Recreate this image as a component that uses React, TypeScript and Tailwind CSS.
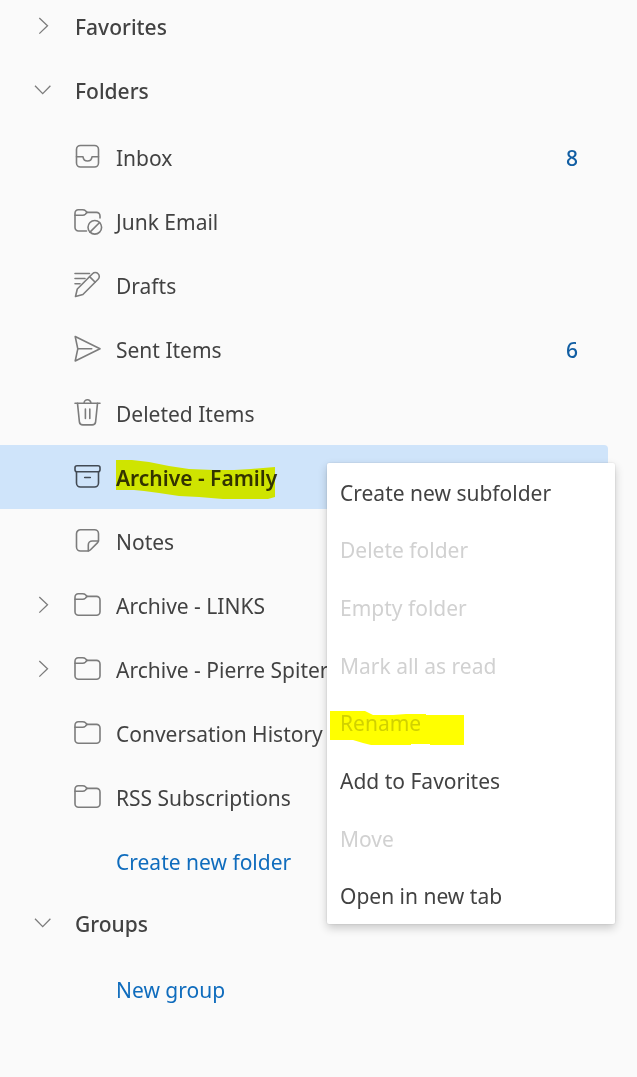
import { useState } from 'react'
import type { ReactNode } from 'react'
import clsx from 'clsx'

type IconName = 'inbox' | 'junk' | 'drafts' | 'sent' | 'trash' | 'archive' | 'notes' | 'folder'

type Folder = {
  name: string
  icon: IconName
  count?: number
  expandable?: boolean
}

const folders: Folder[] = [
  { name: 'Inbox', icon: 'inbox', count: 8 },
  { name: 'Junk Email', icon: 'junk' },
  { name: 'Drafts', icon: 'drafts' },
  { name: 'Sent Items', icon: 'sent', count: 6 },
  { name: 'Deleted Items', icon: 'trash' },
  { name: 'Archive - Family', icon: 'archive' },
  { name: 'Notes', icon: 'notes' },
  { name: 'Archive - LINKS', icon: 'folder', expandable: true },
  { name: 'Archive - Pierre Spiter', icon: 'folder', expandable: true },
  { name: 'Conversation History', icon: 'folder' },
  { name: 'RSS Subscriptions', icon: 'folder' },
]

const menuItems = [
  { label: 'Create new subfolder', enabled: true },
  { label: 'Delete folder', enabled: false },
  { label: 'Empty folder', enabled: false },
  { label: 'Mark all as read', enabled: false },
  { label: 'Rename', enabled: false, marked: true },
  { label: 'Add to Favorites', enabled: true },
  { label: 'Move', enabled: false },
  { label: 'Open in new tab', enabled: true },
]

const iconShapes: Record<IconName, ReactNode> = {
  inbox: (
    <>
      <rect x="3.5" y="3.5" width="22" height="21.5" rx="4" />
      <path d="M3.5 14.8H10c.4 2.6 2 4.2 4.5 4.2s4.1-1.6 4.5-4.2h6.5" />
    </>
  ),
  junk: (
    <>
      <path d="M13.5 25H5.5A3.5 3.5 0 0 1 2 21.500V7.200A3.300 3.300 0 0 1 5.300 3.700H9.500c1.300 0 2.300.3 3 1.100L14 6.400h9.500A3.500 3.500 0 0 1 27 9.900V12" />
      <path d="M2 9.300h7.700c1.100 0 1.900-.3 2.600-1l1.700-1.900" />
      <circle cx="21.800" cy="21.300" r="6.800" />
      <path d="m17 26.100 9.600-9.600" />
    </>
  ),
  drafts: (
    <>
      <path d="M2 3.500h14.500M2 8.500h10M2 13.700h5" />
      <path d="M2.500 26.500 4.300 19 19.500 3.700a3.900 3.900 0 0 1 5.600 0 3.900 3.900 0 0 1 0 5.600L9.900 24.500z" />
      <path d="m16.600 6.600 5.600 5.600" />
    </>
  ),
  sent: (
    <>
      <path d="M2.200 2.500 27 14.800 2.200 27l2.600-12.200z" />
      <path d="M4.800 14.800h13.900" />
    </>
  ),
  trash: (
    <>
      <path d="M2 5.300h25M11 5.300a3.500 3.500 0 0 1 7 0" />
      <path d="m4.500 5.300 1.900 18.500a3.500 3.500 0 0 0 3.500 3.100h9.200a3.500 3.500 0 0 0 3.500-3.100l1.900-18.500" />
      <path d="M12.400 11v9.500M16.800 11v9.500" />
    </>
  ),
  archive: (
    <>
      <rect x="2" y="3.700" width="25" height="6" rx="2" />
      <path d="M3.500 9.700V21a4 4 0 0 0 4 4h14a4 4 0 0 0 4-4V9.700M11.700 15.500h5.600" />
    </>
  ),
  notes: (
    <>
      <path d="M15 25H7.500a4 4 0 0 1-4-4V7.700a4 4 0 0 1 4-4h14a4 4 0 0 1 4 4v6.600c0 1-.4 1.900-1.100 2.600l-6.900 6.900A4 4 0 0 1 15 25z" />
      <path d="M15.300 25v-6a4 4 0 0 1 4-4h6.200" />
    </>
  ),
  folder: (
    <>
      <path d="M2 21.800V7.200a3.300 3.300 0 0 1 3.300-3.500H9.500c1.300 0 2.300.3 3 1.100L14 6.400h9.500A3.500 3.500 0 0 1 27 9.900v11.900a3.500 3.500 0 0 1-3.500 3.500h-18A3.500 3.500 0 0 1 2 21.800z" />
      <path d="M2 9.300h7.700c1.100 0 1.900-.3 2.600-1l1.700-1.900" />
    </>
  ),
}

function FolderIcon({ name, active }: { name: IconName; active?: boolean }) {
  return (
    <svg
      viewBox="0 0 30 30"
      className={clsx('size-[30px] shrink-0', active ? 'text-[#424a54]' : 'text-[#7c7c7c]')}
      fill="none"
      stroke="currentColor"
      strokeWidth="1.6"
      strokeLinecap="round"
      strokeLinejoin="round"
      aria-hidden="true"
    >
      {iconShapes[name]}
    </svg>
  )
}

function Chevron({ open }: { open: boolean }) {
  return (
    <svg viewBox="0 0 20 20" className="size-5 shrink-0 text-[#7c7c7c]" fill="none" stroke="currentColor" strokeWidth="1.3" aria-hidden="true">
      <path d={open ? 'M2 5.700 9.700 13.600 17.400 5.700' : 'M6.300 2 14.500 9.800 6.300 17.600'} />
    </svg>
  )
}

function SectionHeader({ title, open, onToggle }: { title: string; open: boolean; onToggle: () => void }) {
  return (
    <h2>
      <button type="button" aria-expanded={open} onClick={onToggle} className="flex h-16 w-full items-center gap-[22px] pl-[33px] text-left font-medium">
        <Chevron open={open} />
        <span className="pt-0.5">{title}</span>
      </button>
    </h2>
  )
}

function FolderMenu() {
  return (
    <div
      role="menu"
      className="absolute top-[18px] left-[327px] z-10 grid h-[461px] w-72 grid-rows-8 rounded-xs bg-white font-normal shadow-[0_4px_10px_rgba(0,0,0,0.2),0_0_2px_rgba(0,0,0,0.15)]"
    >
      {menuItems.map((item) => (
        <button
          key={item.label}
          type="button"
          role="menuitem"
          disabled={!item.enabled}
          className="flex items-center px-[13px] text-left text-[#424242] disabled:text-[#d1d1d1]"
        >
          <span className="relative pt-0.5">
            {item.label}
            {item.marked ? (
              <svg viewBox="0 0 134 35" className="absolute top-1.5 -left-[10px] h-[35px] w-[134px] max-w-none mix-blend-multiply" fill="#ffff00" aria-hidden="true">
                <path d="M0 0h35l8 4h20l13-1h20v1h38v30h-34v-1H81v1H41l-8-2-10-3H0z" />
              </svg>
            ) : null}
          </span>
        </button>
      ))}
    </div>
  )
}

export default function App() {
  const [openSections, setOpenSections] = useState({ favorites: false, folders: true, groups: true })
  const [selected, setSelected] = useState('Archive - Family')

  function toggle(section: keyof typeof openSections) {
    setOpenSections((current) => ({ ...current, [section]: !current[section] }))
  }

  return (
    <div className="min-h-screen overflow-hidden bg-[#fafafa] font-['Noto_Sans','Open_Sans',sans-serif] text-[21px] leading-8 text-[#424242]">
      <nav aria-label="Folder pane" className="-mt-[6px] pr-[29px] whitespace-nowrap">
        <SectionHeader title="Favorites" open={openSections.favorites} onToggle={() => toggle('favorites')} />

        <SectionHeader title="Folders" open={openSections.folders} onToggle={() => toggle('folders')} />
        {openSections.folders ? (
          <ul className="-mb-0.5 pt-[3px]">
            {folders.map((folder) => {
              const active = folder.name === selected
              return (
                <li key={folder.name} className={clsx('relative rounded-r', active && 'bg-[#cfe4fa] font-semibold text-[#333333]')}>
                  <button type="button" onClick={() => setSelected(folder.name)} className="flex h-16 w-full items-center pr-[30px] pl-[33px] text-left">
                    <span className="flex w-10 shrink-0">{folder.expandable ? <Chevron open={false} /> : null}</span>
                    <FolderIcon name={folder.icon} active={active} />
                    <span className="relative ml-[13px] pt-0.5">
                      {folder.name}
                      {folder.name === 'Archive - Family' ? (
                        <svg viewBox="0 0 159 40" className="absolute top-0 left-0 h-10 w-[159px] max-w-none mix-blend-multiply" fill="#ffff00" aria-hidden="true">
                          <path d="M0 0h16l17 2 20 4 20 3 25 1h20l17-1 24-2v30l-7 2H107l-24-2-20-1-20-3-15-2-10-1H0z" />
                        </svg>
                      ) : null}
                    </span>
                    {folder.count ? <span className="ml-auto pt-0.5 font-medium text-[#115ea3]">{folder.count}</span> : null}
                  </button>
                  {folder.name === 'Archive - Family' ? <FolderMenu /> : null}
                </li>
              )
            })}
            <li>
              <a href="#new-folder" className="flex h-16 items-center pt-0.5 pl-[116px] text-[#0f6cbd]">
                Create new folder
              </a>
            </li>
          </ul>
        ) : null}

        <SectionHeader title="Groups" open={openSections.groups} onToggle={() => toggle('groups')} />
        {openSections.groups ? (
          <a href="#new-group" className="mt-0.5 flex h-16 items-center pt-0.5 pl-[116px] text-[#0f6cbd]">
            New group
          </a>
        ) : null}
      </nav>
    </div>
  )
}
